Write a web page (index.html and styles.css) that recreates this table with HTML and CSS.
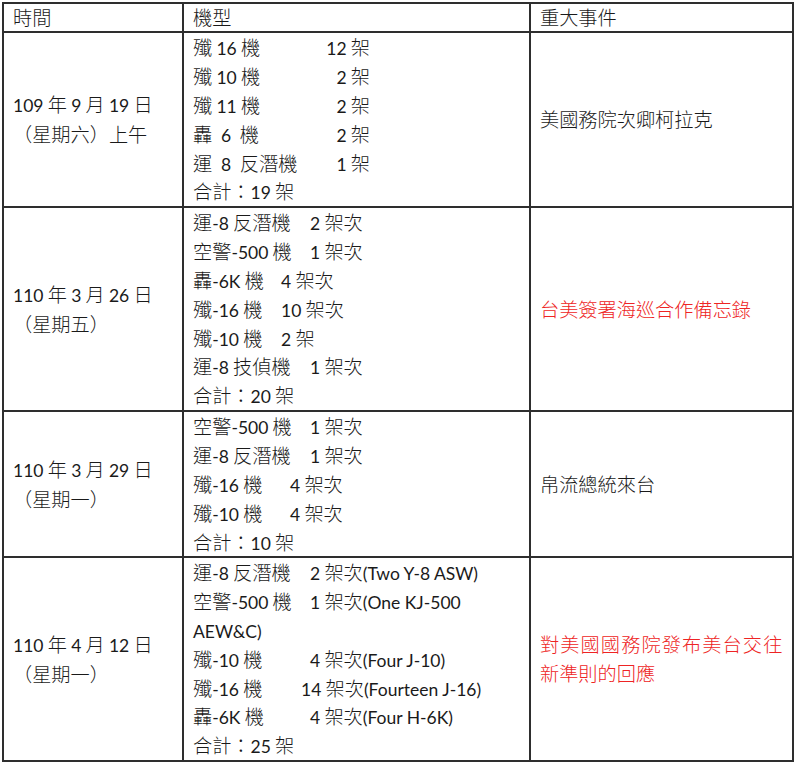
FILE: index.html
```html
<!DOCTYPE html>
<html lang="zh-Hant">
<head>
<meta charset="utf-8">
<title>共機擾台紀錄</title>
<link rel="stylesheet" href="styles.css">
</head>
<body>
<div class="tbl">
  <div class="c h">時間</div>
  <div class="c h">機型</div>
  <div class="c h">重大事件</div>

  <div class="c mid">
    <div><span class="n">109</span> 年 <span class="n">9</span> 月 <span class="n">19</span> 日</div>
    <div>（星期六）上午</div>
  </div>
  <div class="c list">
    <div class="ln tab"><span>殲 <span class="n">16</span> 機</span><span><span class="n">12</span> 架</span></div>
    <div class="ln tab"><span>殲 <span class="n">10</span> 機</span><span><span class="n">2</span> 架</span></div>
    <div class="ln tab"><span>殲 <span class="n">11</span> 機</span><span><span class="n">2</span> 架</span></div>
    <div class="ln tab"><span>轟<span class="n">&ensp;6&ensp;</span>機</span><span><span class="n">2</span> 架</span></div>
    <div class="ln tab"><span>運<span class="n">&ensp;8&ensp;</span>反潛機</span><span><span class="n">1</span> 架</span></div>
    <div class="ln">合計：<span class="n">19</span> 架</div>
  </div>
  <div class="c mid"><div>美國務院次卿柯拉克</div></div>

  <div class="c mid">
    <div><span class="n">110</span> 年 <span class="n">3</span> 月 <span class="n">26</span> 日</div>
    <div>（星期五）</div>
  </div>
  <div class="c list">
    <div class="ln"><span class="nm w117">運<span class="n">-8</span> 反潛機</span><span class="n">2</span> 架次</div>
    <div class="ln"><span class="nm w117">空警<span class="n">-500</span> 機</span><span class="n">1</span> 架次</div>
    <div class="ln"><span class="nm w88">轟<span class="n">-6K</span> 機</span><span class="n">4</span> 架次</div>
    <div class="ln"><span class="nm w88">殲<span class="n">-16</span> 機</span><span class="n">10</span> 架次</div>
    <div class="ln"><span class="nm w88">殲<span class="n">-10</span> 機</span><span class="n">2</span> 架</div>
    <div class="ln"><span class="nm w117">運<span class="n">-8</span> 技偵機</span><span class="n">1</span> 架次</div>
    <div class="ln">合計：<span class="n">20</span> 架</div>
  </div>
  <div class="c mid red"><div>台美簽署海巡合作備忘錄</div></div>

  <div class="c mid">
    <div><span class="n">110</span> 年 <span class="n">3</span> 月 <span class="n">29</span> 日</div>
    <div>（星期一）</div>
  </div>
  <div class="c list">
    <div class="ln"><span class="nm w117">空警<span class="n">-500</span> 機</span><span class="n">1</span> 架次</div>
    <div class="ln"><span class="nm w117">運<span class="n">-8</span> 反潛機</span><span class="n">1</span> 架次</div>
    <div class="ln"><span class="nm w97">殲<span class="n">-16</span> 機</span><span class="n">4</span> 架次</div>
    <div class="ln"><span class="nm w97">殲<span class="n">-10</span> 機</span><span class="n">4</span> 架次</div>
    <div class="ln">合計：<span class="n">10</span> 架</div>
  </div>
  <div class="c mid"><div>帛流總統來台</div></div>

  <div class="c mid">
    <div><span class="n">110</span> 年 <span class="n">4</span> 月 <span class="n">12</span> 日</div>
    <div>（星期一）</div>
  </div>
  <div class="c list">
    <div class="ln"><span class="nm w117">運<span class="n">-8</span> 反潛機</span><span class="n">2</span> 架次<span class="n">(Two Y-8 ASW)</span></div>
    <div class="ln"><span class="nm w117">空警<span class="n">-500</span> 機</span><span class="n">1</span> 架次<span class="n">(One KJ-500</span></div>
    <div class="ln"><span class="n">AEW&amp;C)</span></div>
    <div class="ln"><span class="nm w117">殲<span class="n">-10</span> 機</span><span class="n">4</span> 架次<span class="n">(Four J-10)</span></div>
    <div class="ln"><span class="nm w108">殲<span class="n">-16</span> 機</span><span class="n">14</span> 架次<span class="n">(Fourteen J-16)</span></div>
    <div class="ln"><span class="nm w117">轟<span class="n">-6K</span> 機</span><span class="n">4</span> 架次<span class="n">(Four H-6K)</span></div>
    <div class="ln">合計：<span class="n">25</span> 架</div>
  </div>
  <div class="c mid red">
    <div class="wide">對美國國務院發布美台交往</div>
    <div>新準則的回應</div>
  </div>
</div>
</body>
</html>
```

FILE: styles.css
```css
html, body {
  margin: 0;
  padding: 0;
  background: #ffffff;
}

body {
  font-family: "Noto Sans CJK TC", "Noto Sans CJK SC", sans-serif;
  font-size: 19.2px;
  font-weight: 300;
  line-height: 29px;
  color: #1a1a1a;
}

.tbl {
  display: grid;
  grid-template-columns: 180px 347px 263px;
  grid-template-rows: 29px 175px 204px 146px 204px;
  margin: 2px 0 0 2px;
  width: 790px;
  border-left: 2px solid #2e2e2e;
  border-top: 2px solid #2e2e2e;
}

.c {
  box-sizing: border-box;
  border-right: 2px solid #2e2e2e;
  border-bottom: 2px solid #2e2e2e;
  padding: 0 6px 0 9px;
  overflow: hidden;
  white-space: nowrap;
}

.h {
  line-height: 27px;
}

.mid {
  display: flex;
  flex-direction: column;
  justify-content: center;
}

.list {
  display: flex;
  flex-direction: column;
}

.ln {
  height: 28.9px;
  line-height: 28.9px;
}

.tab {
  display: flex;
  justify-content: space-between;
  width: 177px;
}

.nm {
  display: inline-block;
}

.w88 { width: 88px; }
.w97 { width: 97px; }
.w108 { width: 108px; }
.w117 { width: 117px; }

.n {
  font-family: "Lato", "Liberation Sans", sans-serif;
  font-size: 17.5px;
  font-weight: 400;
}

.red {
  color: #ee2424;
}

.wide {
  letter-spacing: 1.1px;
}
```
